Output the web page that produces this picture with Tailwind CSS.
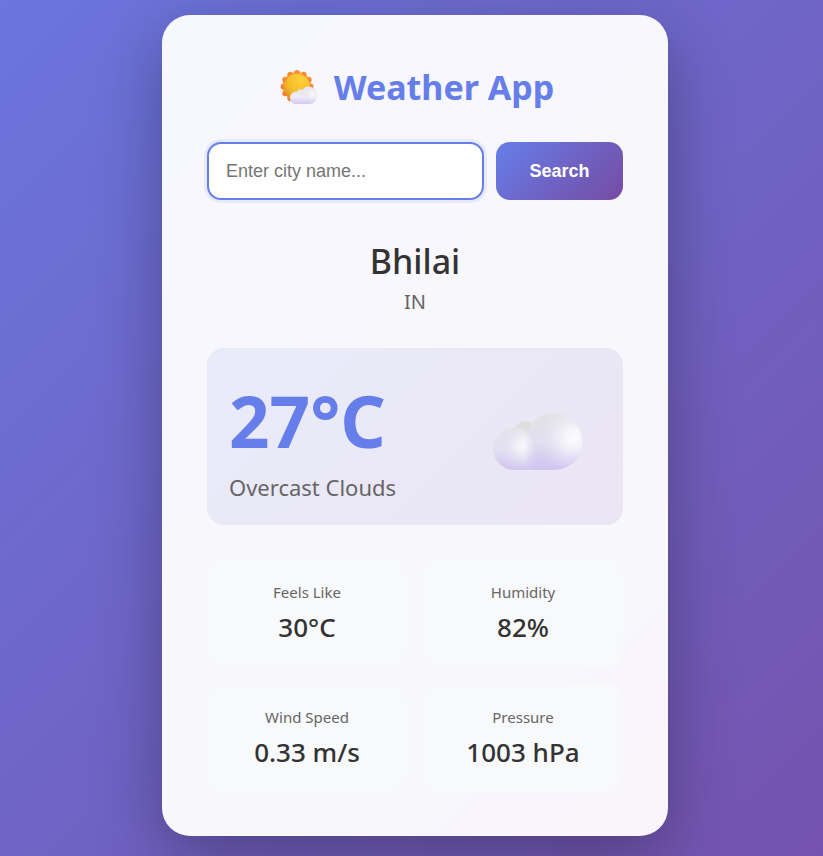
<!DOCTYPE html>
<html lang="en">
<head>
<meta charset="utf-8">
<meta name="viewport" content="width=device-width, initial-scale=1">
<title>Weather App</title>
<script src="https://cdn.jsdelivr.net/npm/@tailwindcss/browser@4"></script>
</head>
<body class="min-h-screen bg-linear-[135deg,#6a75dd,#7453ae] pt-[15px] pb-5 pl-[7px] font-['Noto_Sans','Open_Sans',sans-serif] text-[#333]">
<main class="mx-auto w-full max-w-[506px] rounded-[28px] bg-white/95 px-[45px] pt-[45px] pb-11 shadow-[0_22px_67px_rgba(0,0,0,0.3)]">
  <h1 class="mb-7 flex items-center justify-center gap-4 pl-1 text-[34px] leading-[54px] font-bold text-[#667eea]">
    <svg class="h-9 w-[38px] shrink-0" viewBox="0 0 38 36" aria-hidden="true">
      <defs>
        <radialGradient id="sun" cx="0.65" cy="0.25" r="0.8"><stop offset="0" stop-color="#fcd237"/><stop offset="0.6" stop-color="#f8bd2c"/><stop offset="1" stop-color="#dd9a22"/></radialGradient>
        <linearGradient id="rays" x1="0" y1="0" x2="0" y2="1"><stop offset="0" stop-color="#ff922f"/><stop offset="1" stop-color="#f47a35"/></linearGradient>
        <linearGradient id="puff" x1="0" y1="0" x2="0" y2="1"><stop offset="0" stop-color="#e4e3e7"/><stop offset="0.6" stop-color="#edebf5"/><stop offset="1" stop-color="#d1c7f0"/></linearGradient>
        <radialGradient id="puffLight" cx="0.7" cy="0.4" r="0.6"><stop offset="0" stop-color="#fafafd"/><stop offset="1" stop-color="#e2dfef" stop-opacity="0"/></radialGradient>
      </defs>
      <g fill="url(#rays)">
        <circle cx="17" cy="17.500" r="14"/>
        <circle cx="17" cy="4" r="3"/><circle cx="23.700" cy="5.800" r="3"/><circle cx="28.700" cy="10.700" r="3"/><circle cx="30.500" cy="17.500" r="3"/><circle cx="28.700" cy="24.300" r="3"/><circle cx="23.700" cy="29.200" r="3"/><circle cx="17" cy="31" r="3"/><circle cx="10.300" cy="29.200" r="3"/><circle cx="5.300" cy="24.300" r="3"/><circle cx="3.500" cy="17.500" r="3"/><circle cx="5.300" cy="10.700" r="3"/><circle cx="10.300" cy="5.800" r="3"/>
      </g>
      <circle cx="17" cy="17.500" r="13" fill="url(#sun)"/>
      <path d="M16 35a6 6 0 0 1-6-6.300c0-4 3.500-6.500 7-5.900 1-2.600 3.700-3 5.300-1.900A8.200 8.200 0 0 1 37 27c0 4.700-3.300 8-8 8Z" fill="url(#puff)"/>
      <circle cx="29" cy="26.500" r="8" fill="url(#puffLight)"/>
    </svg>
    <span>Weather App</span>
  </h1>

  <form class="mb-[34px] flex gap-3" onsubmit="return false">
    <input type="text" aria-label="City name" placeholder="Enter city name..." class="h-[58px] min-w-0 flex-1 rounded-[14px] border-2 border-[#667eea] bg-white px-[17px] font-['Liberation_Sans',sans-serif] text-[18px] shadow-[0_0_0_3px_rgba(102,126,234,0.1)] outline-none placeholder:text-[#757575]">
    <button type="submit" class="h-[58px] w-[127px] rounded-[14px] bg-linear-[135deg,#667eea,#764ba2] font-['Liberation_Sans',sans-serif] text-[18px] font-bold text-white">Search</button>
  </form>

  <section class="mb-8 text-center">
    <h2 class="text-[34px] leading-[54px] font-medium">Bhilai</h2>
    <p class="text-[20px] leading-7 text-[#666]">IN</p>
  </section>

  <section class="mb-[33px] flex h-[177px] items-center justify-between rounded-[17px] bg-linear-[135deg,rgba(102,126,234,0.1),rgba(118,75,162,0.1)] px-[22px]">
    <div class="pt-1">
      <p class="text-[71px] leading-[96px] font-bold text-[#667eea]">27°C</p>
      <p class="text-[22px] leading-9 text-[#666]">Overcast Clouds</p>
    </div>
    <svg class="mt-2 mr-[17px] h-[60px] w-[91px] shrink-0" viewBox="0 0 91 60" role="img" aria-label="Cloud">
      <defs>
        <linearGradient id="base" x1="0" y1="0" x2="0" y2="1"><stop offset="0" stop-color="#e2e2e3"/><stop offset="0.5" stop-color="#e2dff0"/><stop offset="0.85" stop-color="#d3caf2"/><stop offset="1" stop-color="#d0c6ef"/></linearGradient>
        <linearGradient id="smallBase" x1="0" y1="0" x2="0" y2="1"><stop offset="0" stop-color="#e5e5e7"/><stop offset="0.5" stop-color="#e3e0f1"/><stop offset="1" stop-color="#d0c6ef"/></linearGradient>
        <radialGradient id="bigLight" cx="0.84" cy="0.44" r="0.6"><stop offset="0" stop-color="#fdfdff"/><stop offset="0.25" stop-color="#f8f7fc" stop-opacity="0.9"/><stop offset="1" stop-color="#e8e5f2" stop-opacity="0"/></radialGradient>
        <radialGradient id="smallLight" cx="0.7" cy="0.42" r="0.6"><stop offset="0" stop-color="#fafafc"/><stop offset="0.3" stop-color="#f3f2f7" stop-opacity="0.85"/><stop offset="1" stop-color="#ddd7f2" stop-opacity="0"/></radialGradient>
        <linearGradient id="fade" x1="30" y1="0" x2="44" y2="0" gradientUnits="userSpaceOnUse"><stop offset="0" stop-color="#fff"/><stop offset="1" stop-color="#000"/></linearGradient>
        <mask id="blend" maskUnits="userSpaceOnUse" x="0" y="0" width="91" height="60"><rect width="91" height="60" fill="url(#fade)"/></mask>
      </defs>
      <path d="M21 19c3-8 11-11 18-7l-4 15Z" fill="#dededd"/>
      <path d="M22 59A21 21 0 1 1 34.500 21.500C38 10 48 2 61 2a28.500 28.500 0 0 1 0 57Z" fill="url(#base)"/>
      <circle cx="61" cy="30.500" r="28.500" fill="url(#bigLight)"/>
      <g mask="url(#blend)">
        <path d="M22 59A21 21 0 1 1 34.500 21.500C42 26 44 38 44 59Z" fill="url(#smallBase)"/>
        <path d="M22 59A21 21 0 1 1 34.500 21.500C42 26 44 38 44 59Z" fill="url(#smallLight)"/>
      </g>
    </svg>
  </section>

  <dl class="grid grid-cols-2 gap-4 text-center">
    <div class="h-[109px] rounded-[17px] bg-[#f8f9fb] pt-5">
      <dt class="text-[15px] leading-7 text-[#666]">Feels Like</dt>
      <dd class="text-[26px] leading-[42px] font-medium">30°C</dd>
    </div>
    <div class="h-[109px] rounded-[17px] bg-[#f8f9fb] pt-5">
      <dt class="text-[15px] leading-7 text-[#666]">Humidity</dt>
      <dd class="text-[26px] leading-[42px] font-medium">82%</dd>
    </div>
    <div class="h-[109px] rounded-[17px] bg-[#f8f9fb] pt-5">
      <dt class="text-[15px] leading-7 text-[#666]">Wind Speed</dt>
      <dd class="text-[26px] leading-[42px] font-medium">0.33 m/s</dd>
    </div>
    <div class="h-[109px] rounded-[17px] bg-[#f8f9fb] pt-5">
      <dt class="text-[15px] leading-7 text-[#666]">Pressure</dt>
      <dd class="text-[26px] leading-[42px] font-medium">1003 hPa</dd>
    </div>
  </dl>
</main>
</body>
</html>
